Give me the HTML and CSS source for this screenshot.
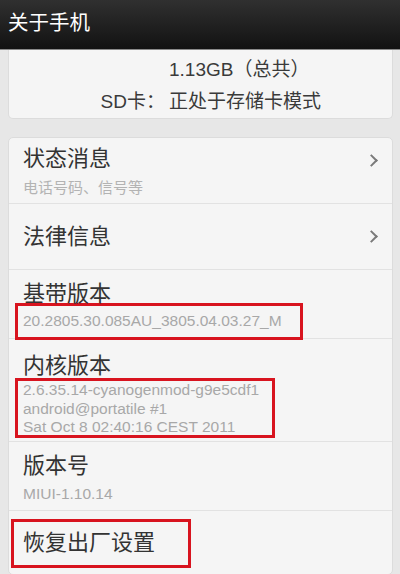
FILE: index.html
```html
<!DOCTYPE html>
<html lang="zh-CN">
<head>
  <meta charset="UTF-8">
  <meta name="viewport" content="width=device-width, initial-scale=1.0">
  <title>关于手机</title>
  <link rel="stylesheet" href="styles.css">
</head>
<body>
  <div class="titlebar">关于手机</div>

  <div class="card storage">
    <div class="kv"><span class="k"></span><span class="v">1.13GB（总共）</span></div>
    <div class="kv"><span class="k">SD卡：</span><span class="v">正处于存储卡模式</span></div>
  </div>

  <div class="card list">
    <div class="row row-status">
      <div class="row-main">
        <div class="row-title">状态消息</div>
        <div class="row-sub">电话号码、信号等</div>
      </div>
      <span class="chevron"></span>
    </div>
    <div class="row row-legal">
      <div class="row-main">
        <div class="row-title">法律信息</div>
      </div>
      <span class="chevron"></span>
    </div>
    <div class="row row-baseband">
      <div class="row-title">基带版本</div>
      <div class="mark mark-baseband">
        <div class="row-info">20.2805.30.085AU_3805.04.03.27_M</div>
      </div>
    </div>
    <div class="row row-kernel">
      <div class="row-title">内核版本</div>
      <div class="mark mark-kernel">
        <div class="row-info">2.6.35.14-cyanogenmod-g9e5cdf1</div>
        <div class="row-info">android@portatile #1</div>
        <div class="row-info">Sat Oct 8 02:40:16 CEST 2011</div>
      </div>
    </div>
    <div class="row row-build">
      <div class="row-title">版本号</div>
      <div class="row-info">MIUI-1.10.14</div>
    </div>
    <div class="row row-reset">
      <div class="mark mark-reset">
        <div class="row-title">恢复出厂设置</div>
      </div>
    </div>
  </div>
</body>
</html>
```

FILE: styles.css
```css
body {
  margin: 0;
  background: #e7e7e7;
  font-family: "Liberation Sans", "Noto Sans CJK SC", sans-serif;
  color: #333333;
  height: 574px;
  overflow: hidden;
}

.titlebar {
  height: 49px;
  line-height: 45px;
  padding-left: 8px;
  background: linear-gradient(#303030, #121212);
  border-bottom: 1px solid #8a8a8a;
  color: #ffffff;
  font-size: 20.5px;
}

.card {
  margin: 0 7px 0 8px;
  background: #f5f5f5;
  border: 1px solid #dcdcdc;
  border-radius: 5px;
}

/* 存储卡片（上半部分被标题栏遮住） */
.storage {
  border-top: none;
  border-radius: 0 0 5px 5px;
  height: 67px;
  padding-top: 1px;
}

.kv {
  display: flex;
  height: 32px;
  align-items: center;
  font-size: 19px;
  color: #3a3a3a;
}

.kv .k {
  width: 156px;
  text-align: right;
  padding-right: 4px;
}

.list {
  margin-top: 18px;
  height: 436px;
  overflow: hidden;
}

.row {
  border-bottom: 1px solid #e2e2e2;
  padding-left: 14px;
  box-sizing: border-box;
}

.row-status,
.row-legal {
  display: flex;
  align-items: center;
  padding-right: 14px;
}

.row-main {
  flex: 1;
}

.row-title {
  font-size: 22px;
  line-height: 26px;
  color: #333333;
}

.row-sub {
  font-size: 15px;
  line-height: 20px;
  color: #b3b3b3;
  margin-top: 6px;
}

.row-info {
  font-size: 15.5px;
  line-height: 18.5px;
  color: #a8a8a8;
}

.row-status {
  height: 66px;
  padding-top: 2px;
}

.row-legal {
  height: 66px;
}

.chevron {
  width: 7px;
  height: 7px;
  border-right: 2px solid #7a7a7a;
  border-top: 2px solid #7a7a7a;
  transform: rotate(45deg);
  margin-right: 2px;
}

.row-status .chevron {
  margin-top: -22px;
}

.row-baseband {
  height: 69px;
  padding-top: 11px;
}

.row-kernel {
  height: 103px;
  padding-top: 14px;
}

.row-build {
  height: 69px;
  padding-top: 11px;
}

.row-build .row-info {
  margin-top: 6px;
}

.row-reset {
  border-bottom: none;
  padding-left: 2px;
  padding-top: 8px;
}

/* 红色标注框 */
.mark {
  border: 3px solid #d8141f;
  box-sizing: border-box;
}

.mark-baseband {
  width: 288px;
  height: 37px;
  margin-left: -8px;
  margin-top: -4px;
  padding: 6px 0 0 5px;
}

.mark-kernel {
  width: 260px;
  height: 60px;
  margin-left: -8px;
  margin-top: -1px;
  padding: 0 0 0 5px;
}

.mark-reset {
  width: 180px;
  height: 49px;
  padding: 8px 0 0 9px;
}
```
